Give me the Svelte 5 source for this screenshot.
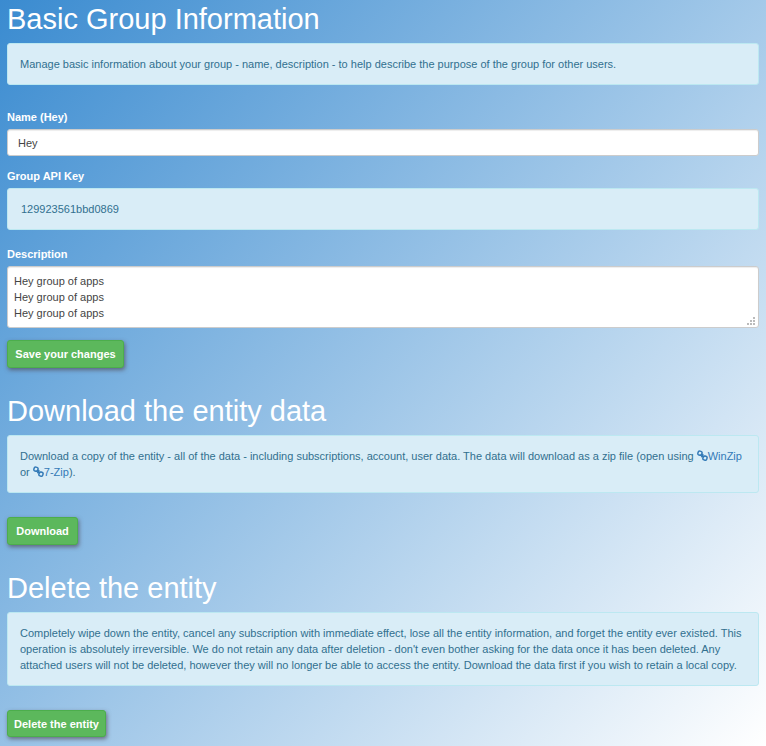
<script>
  let name = $state('Hey');
  let description = $state('Hey group of apps\nHey group of apps\nHey group of apps');
</script>

{#snippet linkIcon()}
  <svg class="link-icon" viewBox="0 0 11 11" aria-hidden="true">
    <rect x="1" y="1.2" width="4" height="4" rx="1.5" transform="rotate(15 3 3)" />
    <rect x="6" y="6.1" width="4" height="4" rx="1.5" transform="rotate(15 8 8)" />
    <path d="M3.7 4.2 7.3 7.2M5.3 4.2l1 .8M4.2 6.2l1.3 1" />
  </svg>
{/snippet}

<main>
  <section>
    <h1 class="t1">Basic Group Information</h1>
    <div class="alert intro"><p>Manage basic information about your group - name, description - to help describe the purpose of the group for other users.</p></div>
    <form onsubmit={(e) => e.preventDefault()}>
      <label for="name">Name (Hey)</label>
      <input id="name" bind:value={name} />
      <label for="key" class="key-label">Group API Key</label>
      <div id="key" class="alert key">129923561bbd0869</div>
      <label for="description">Description</label>
      <div class="area">
        <textarea id="description" bind:value={description}></textarea>
        <svg class="grip" viewBox="0 0 8 8" aria-hidden="true"><path d="M6 0h2v2H6zM3 3h2v2H3zM6 3h2v2H6zM0 6h2v2H0zM3 6h2v2H3zM6 6h2v2H6z" /></svg>
      </div>
      <button class="save">Save your changes</button>
    </form>
  </section>
  <section class="download">
    <h1 class="t2">Download the entity data</h1>
    <div class="alert">
      <p class="d1">Download a copy of the entity - all of the data - including subscriptions, account, user data. The data will download as a zip file (open using <a href="#winzip">{@render linkIcon()}WinZip</a></p>
      <p class="d2">or <a href="#7zip">{@render linkIcon()}7-Zip</a>).</p>
    </div>
    <button class="dl">Download</button>
  </section>
  <section class="delete">
    <h1 class="t3">Delete the entity</h1>
    <div class="alert">
      <p class="x1">Completely wipe down the entity, cancel any subscription with immediate effect, lose all the entity information, and forget the entity ever existed. This</p>
      <p class="x2">operation is absolutely irreversible. We do not retain any data after deletion - don't even bother asking for the data once it has been deleted. Any</p>
      <p class="x3">attached users will not be deleted, however they will no longer be able to access the entity. Download the data first if you wish to retain a local copy.</p>
    </div>
    <button class="del">Delete the entity</button>
  </section>
</main>

<style>
  :global(body) { margin: 0; overflow: hidden; }
  main {
    box-sizing: border-box;
    height: 746px;
    padding: 2px 7px 0;
    overflow: hidden;
    background: linear-gradient(131.6deg, #3a8bd0, #fff);
    font: 11px/16px "Liberation Sans", Arial, sans-serif;
    color: #fff;
  }
  section { display: flex; flex-direction: column; align-items: stretch; }
  form { display: flex; flex-direction: column; }
  h1 { margin: 0; height: 41px; font-size: 29px; line-height: 34px; font-weight: 400; white-space: nowrap; }
  .alert {
    box-sizing: border-box;
    padding: 12px;
    border: 1px solid #bce8f1;
    border-radius: 3px;
    background: #d9edf7;
    color: #31708f;
    white-space: nowrap;
  }
  p { margin: 0; height: 16px; }
  .intro { margin-bottom: 24px; }
  label { height: 20px; font-weight: 700; }
  input, textarea {
    box-sizing: border-box;
    display: block;
    width: 100%;
    margin: 0;
    border: 1px solid #ccc;
    border-radius: 3px;
    background: #fff;
    box-shadow: inset 0 1px 1px rgba(0, 0, 0, 0.075);
    color: #444;
    font: inherit;
    outline: 0;
  }
  input { height: 27px; padding: 0 10px; margin-bottom: 12px; }
  .key { padding-left: 13px; margin-bottom: 16px; }
  .area { position: relative; height: 62px; margin-bottom: 12px; }
  textarea { height: 62px; padding: 6px; resize: none; overflow: hidden; }
  .grip { position: absolute; right: 4px; bottom: 3px; width: 8px; height: 8px; fill: #bbb; }
  button {
    align-self: flex-start;
    box-sizing: border-box;
    height: 28px;
    padding: 0;
    border: 1px solid #4cae4c;
    border-radius: 3px;
    background: #5cb85c;
    box-shadow: 1px 2px 4px rgba(80, 70, 80, 0.7);
    color: #fff;
    font: 700 11px/16px "Liberation Sans", Arial, sans-serif;
    white-space: nowrap;
  }
  .save { width: 117px; }
  .dl { width: 71px; margin-top: 24px; }
  .del { width: 99px; height: 27px; margin-top: 24px; }
  .download, .delete { margin-top: 26px; }
  a { color: #337ab7; text-decoration: none; }
  .link-icon { display: inline-block; width: 11px; height: 11px; vertical-align: -1px; fill: none; stroke: currentColor; stroke-width: 1.5; }
</style>
